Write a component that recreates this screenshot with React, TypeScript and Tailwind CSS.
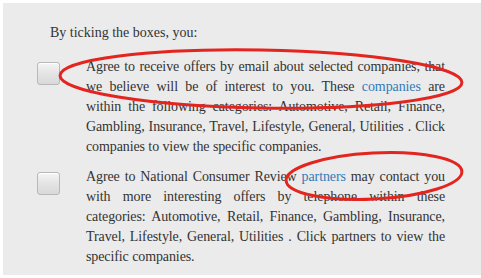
import React from "react";

const serif = { fontFamily: '"Liberation Serif", "Times New Roman", serif' };

function FakeCheckbox() {
  return (
    <div className="mt-[5px] h-[23px] w-[23px] shrink-0 rounded-[3px] border border-[#b8b8b8] bg-gradient-to-b from-[#f5f5f5] via-[#e4e4e4] to-[#d9d9d9] shadow-[inset_0_1px_0_#ffffff]" />
  );
}

export default function App() {
  return (
    <div className="relative h-[278px] w-[481px] overflow-hidden bg-white" style={serif}>
      <div className="ml-[3px] mt-[3px] h-[272px] bg-[#ebebeb] pt-[20px] text-[14px] leading-[20px] text-[#333333]">
        <p className="pl-[47px]">By ticking the boxes, you:</p>

        <div className="mt-[14px] flex pl-[34px]">
          <FakeCheckbox />
          <p className="ml-[26px] w-[359px] text-justify tracking-[-0.1px]">
            Agree to receive offers by email about selected companies, that we believe will be of
            interest to you. These <a className="text-[#337ab7]">companies</a> are{" "}
            {"within\u00a0the"} following categories: Automotive, Retail, Finance, Gambling,
            Insurance, Travel, Lifestyle, General, Utilities . Click companies to view the specific
            companies.
          </p>
        </div>

        <div className="mt-[10px] flex pl-[34px]">
          <FakeCheckbox />
          <p className="ml-[26px] w-[359px] text-justify tracking-[-0.1px]">
            Agree to National Consumer Review <a className="text-[#337ab7]">partners</a> may
            contact you with more interesting offers by telephone within these categories:
            Automotive, Retail, Finance, Gambling, Insurance, Travel, Lifestyle, General, Utilities
            . Click partners to view the specific companies.
          </p>
        </div>
      </div>

      {/* hand-drawn annotation circles */}
      <svg className="pointer-events-none absolute left-0 top-0" width="481" height="278">
        <ellipse
          cx="261"
          cy="79"
          rx="201"
          ry="29"
          transform="rotate(1 261 79)"
          fill="none"
          stroke="#e3241f"
          strokeWidth="3"
        />
        <ellipse
          cx="374"
          cy="176"
          rx="88"
          ry="23"
          transform="rotate(-3 374 176)"
          fill="none"
          stroke="#e3241f"
          strokeWidth="3"
        />
      </svg>
    </div>
  );
}
